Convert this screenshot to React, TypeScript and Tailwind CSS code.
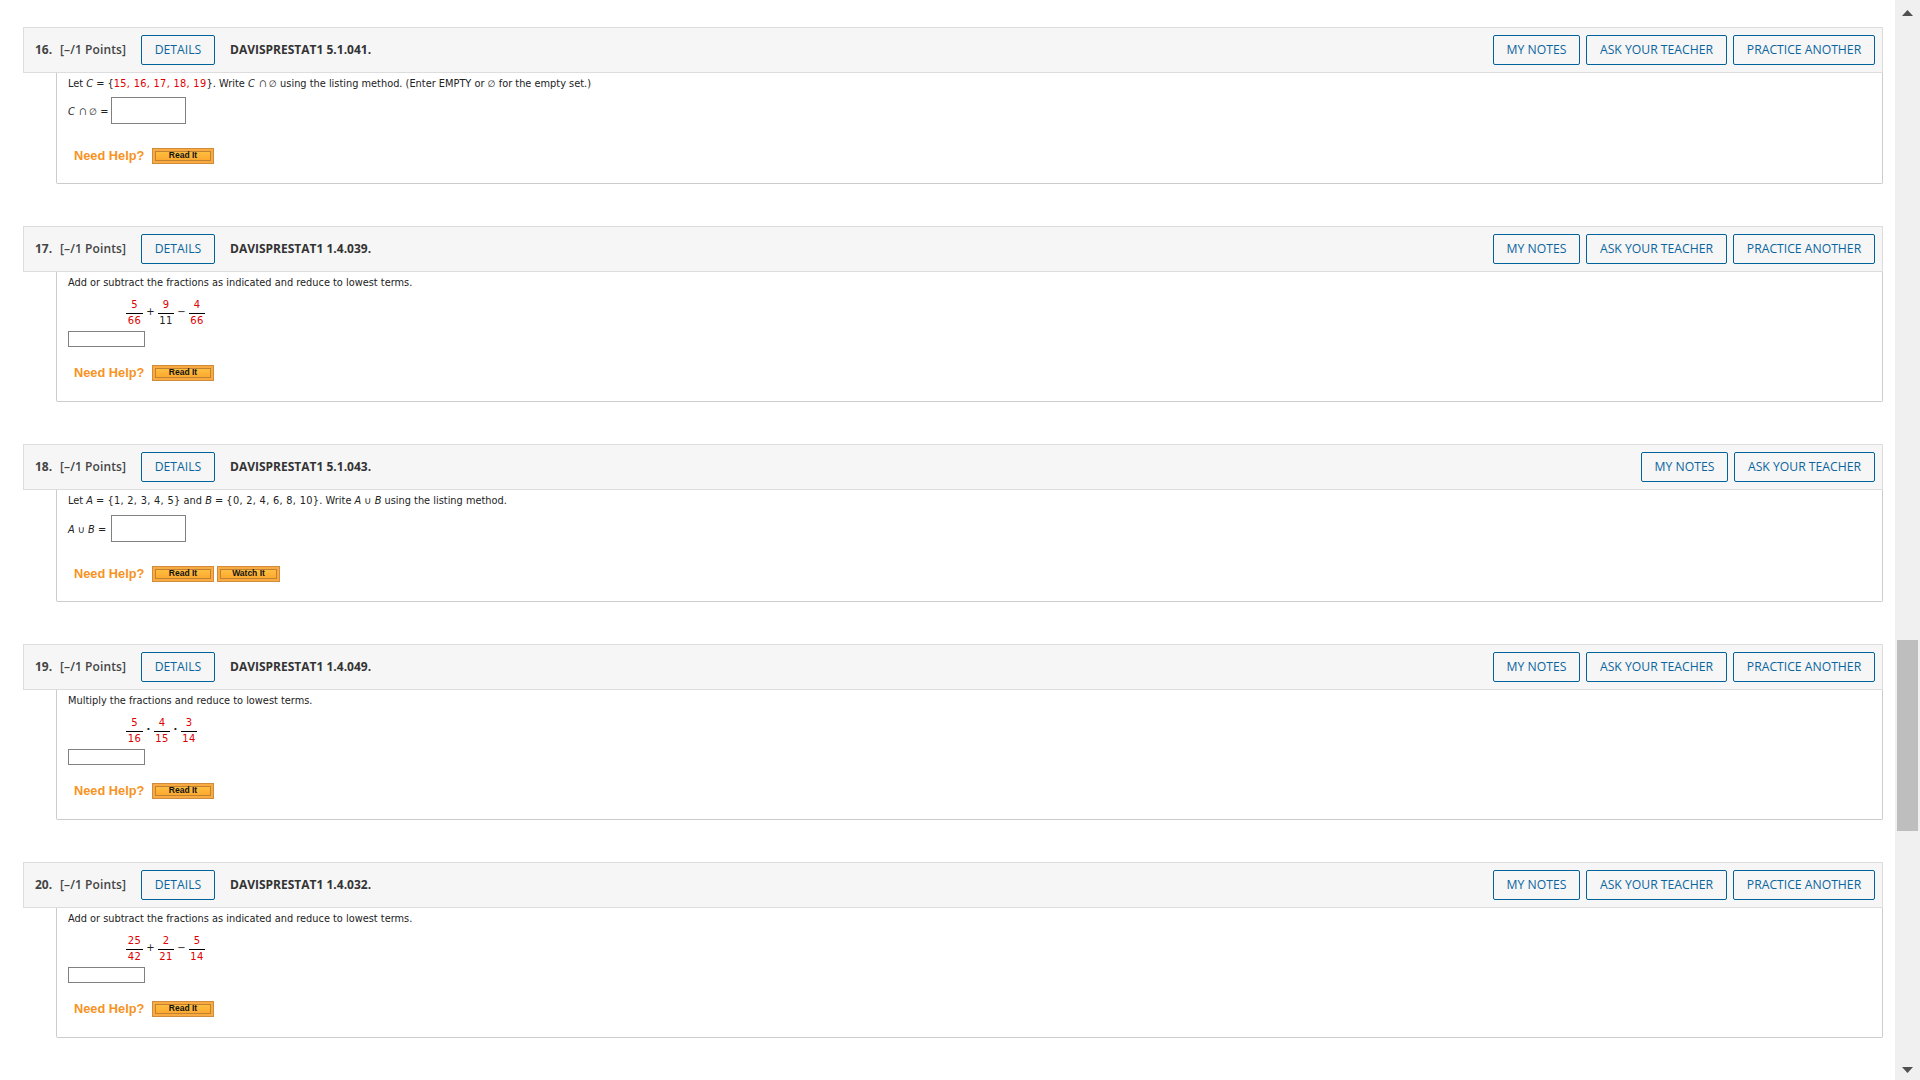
import React from "react";

const OPEN = "font-['Open_Sans',sans-serif]";

function OrangeBtn({ label, w }: { label: string; w: string }) {
  return (
    <span className={`inline-flex h-[16px] ${w} items-center justify-center border border-[#d08c3c] bg-[#f9ab42] p-[2px]`}>
      <span className="flex h-full w-full items-center justify-center border border-[#c08232] bg-gradient-to-b from-[#ffbe40] to-[#fca92f] font-['Liberation_Sans',sans-serif] text-[8.5px] font-bold text-[#111]">
        {label}
      </span>
    </span>
  );
}

function BlueBtn({ label, w }: { label: string; w: string }) {
  return (
    <span className={`flex h-[30px] ${w} items-center justify-center rounded-[2px] border border-[#00629b] text-[12.2px] text-[#0a659e]`}>
      {label}
    </span>
  );
}

type Term = { n: string; d: string; dark?: boolean; w: string };

function Frac({ n, d, dark, w }: Term) {
  return (
    <span className={`inline-flex ${w} flex-col items-center text-[10px] leading-[12px]`}>
      <span className="w-full border-b border-black pb-[2px] text-center tracking-[0.3px] text-[#e00000]">{n}</span>
      <span className={`pt-[1px] text-center tracking-[0.3px] ${dark ? "text-[#222]" : "text-[#e00000]"}`}>{d}</span>
    </span>
  );
}

function Header({ num, code, practice = true }: { num: string; code: string; practice?: boolean }) {
  return (
    <div className={`flex h-[46px] items-center border border-[#dddddd] bg-[#f6f6f6] pr-[7px] ${OPEN}`}>
      <span className="ml-[11px] w-[17px] text-[12px] font-bold text-[#444]">{num}</span>
      <span className="ml-[8px] w-[65px] text-[12px] font-semibold tracking-[0.1px] whitespace-nowrap text-[#444]">[–/1 Points]</span>
      <span className="ml-[16px]">
        <BlueBtn label="DETAILS" w="w-[74px]" />
      </span>
      <span className="ml-[15px] text-[12px] font-bold text-[#333]">{code}</span>
      <div className="ml-auto flex gap-[6px]">
        <BlueBtn label="MY NOTES" w="w-[87px]" />
        <BlueBtn label="ASK YOUR TEACHER" w="w-[141px]" />
        {practice && <BlueBtn label="PRACTICE ANOTHER" w="w-[142px]" />}
      </div>
    </div>
  );
}

function Help({ watch }: { watch?: boolean }) {
  return (
    <div className="flex items-center pl-[6px]">
      <span className="w-[78px] font-['Liberation_Sans',sans-serif] text-[12.8px] font-bold text-[#f7931e]">Need Help?</span>
      <span className="flex gap-[3px]">
        <OrangeBtn label="Read It" w="w-[62px]" />
        {watch && <OrangeBtn label="Watch It" w="w-[63px]" />}
      </span>
    </div>
  );
}

function Body({ children, h }: { children: React.ReactNode; h: string }) {
  return (
    <div className={`ml-[33px] ${h} rounded-b-[2px] border-r border-b border-l border-[#cccccc] pl-[11px] font-['DejaVu_Sans',sans-serif] text-[9.8px] text-[#222]`}>
      {children}
    </div>
  );
}

const Red = ({ children }: { children: React.ReactNode }) => <span className="tracking-[0.3px] text-[#e00000]">{children}</span>;
const Num = ({ children }: { children: React.ReactNode }) => <span className="tracking-[0.3px]">{children}</span>;
const I = ({ children }: { children: React.ReactNode }) => <i>{children}</i>;
const Cap = () => <span className="inline-block w-[8px] text-center font-['Liberation_Sans',sans-serif] text-[13px] leading-[10px]">∩</span>;
const Nil = () => <span className="inline-block w-[8px] text-center text-[9px] leading-[10px]">∅</span>;

function FractionBody({ text, terms, ops, opW }: { text: string; terms: Term[]; ops: string[]; opW: string }) {
  return (
    <Body h="h-[130px]">
      <p className="pt-[4px] leading-[14px]">{text}</p>
      <div className="mt-[9px] ml-[58px] flex items-start">
        {terms.map((t, i) => (
          <React.Fragment key={i}>
            <Frac {...t} />
            {i < ops.length && (
              <span className={`mt-[7px] ${opW} text-center text-[10px] leading-[12px] ${ops[i] === "·" ? "font-bold" : "font-normal"}`}>{ops[i]}</span>
            )}
          </React.Fragment>
        ))}
      </div>
      <div className="mt-[4px] h-[16px] w-[77px] border border-[#808080] bg-white" />
      <div className="mt-[16px]">
        <Help />
      </div>
    </Body>
  );
}

function SetBody({ text, label, watch, h, gap }: { text: React.ReactNode; label: React.ReactNode; watch?: boolean; h: string; gap: string }) {
  return (
    <Body h={h}>
      <p className="pt-[4px] leading-[14px]">{text}</p>
      <div className={`${gap} flex items-center`}>
        <span className="w-[43px] pt-[2px] leading-[14px]">{label}</span>
        <div className="h-[27px] w-[75px] border border-[#808080] bg-white" />
      </div>
      <div className="mt-[22px]">
        <Help watch={watch} />
      </div>
    </Body>
  );
}

export default function App() {
  return (
    <div className="flex h-screen w-full overflow-hidden bg-white">
      <main className="min-w-0 flex-1 pt-[27px] pr-[12px] pl-[23px]">
        <section className="mb-[42px]">
          <Header num="16." code="DAVISPRESTAT1 5.1.041." />
          <SetBody
            h="h-[111px]"
            gap="mt-[6px]"
            text={<>Let <I>C</I> = {"{"}<Red>15, 16, 17, 18, 19</Red>{"}"}. Write <I>C</I> <Cap /> <Nil /> using the listing method. (Enter EMPTY or <Nil /> for the empty set.)</>}
            label={<><I>C</I> <Cap /> <Nil /> =</>}
          />
        </section>
        <section className="mb-[42px]">
          <Header num="17." code="DAVISPRESTAT1 1.4.039." />
          <FractionBody
            opW="w-[15px]"
            text="Add or subtract the fractions as indicated and reduce to lowest terms."
            terms={[
              { n: "5", d: "66", w: "w-[17px]" },
              { n: "9", d: "11", dark: true, w: "w-[16px]" },
              { n: "4", d: "66", w: "w-[16px]" },
            ]}
            ops={["+", "−"]}
          />
        </section>
        <section className="mb-[42px]">
          <Header num="18." code="DAVISPRESTAT1 5.1.043." practice={false} />
          <SetBody
            h="h-[112px]"
            gap="mt-[7px]"
            text={<>Let <I>A</I> = <Num>{"{"}1, 2, 3, 4, 5{"}"}</Num> and <I>B</I> = <Num>{"{"}0, 2, 4, 6, 8, 10{"}"}</Num>. Write <I>A</I> ∪ <I>B</I> using the listing method.</>}
            label={<><I>A</I> ∪ <I>B</I> =</>}
            watch
          />
        </section>
        <section className="mb-[42px]">
          <Header num="19." code="DAVISPRESTAT1 1.4.049." />
          <FractionBody
            opW="w-[11px]"
            text="Multiply the fractions and reduce to lowest terms."
            terms={[
              { n: "5", d: "16", w: "w-[17px]" },
              { n: "4", d: "15", w: "w-[16px]" },
              { n: "3", d: "14", w: "w-[16px]" },
            ]}
            ops={["·", "·"]}
          />
        </section>
        <section>
          <Header num="20." code="DAVISPRESTAT1 1.4.032." />
          <FractionBody
            opW="w-[15px]"
            text="Add or subtract the fractions as indicated and reduce to lowest terms."
            terms={[
              { n: "25", d: "42", w: "w-[17px]" },
              { n: "2", d: "21", w: "w-[16px]" },
              { n: "5", d: "14", w: "w-[16px]" },
            ]}
            ops={["+", "−"]}
          />
        </section>
      </main>
      <aside className="flex w-[25px] shrink-0 flex-col items-center bg-[#f0f0f0]">
        <svg className="mt-[10px]" width="11" height="6" viewBox="0 0 11 6">
          <path d="M5.5 0 L11 6 H0 Z" fill="#505050" />
        </svg>
        <div className="mt-[624px] h-[191px] w-[21px] bg-[#bebebe]" />
        <svg className="mt-[236px]" width="11" height="6" viewBox="0 0 11 6">
          <path d="M0 0 H11 L5.5 6 Z" fill="#505050" />
        </svg>
      </aside>
    </div>
  );
}
